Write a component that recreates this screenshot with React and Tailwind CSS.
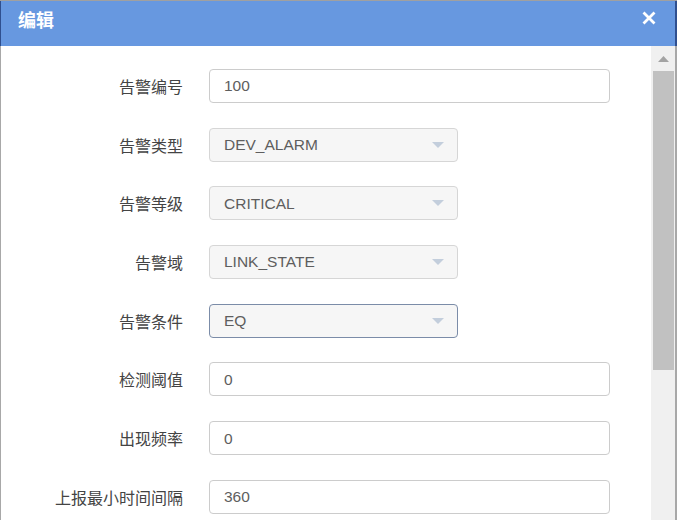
import React from "react";

const rows = [
  { label: "告警编号", value: "100", type: "input" },
  { label: "告警类型", value: "DEV_ALARM", type: "select" },
  { label: "告警等级", value: "CRITICAL", type: "select" },
  { label: "告警域", value: "LINK_STATE", type: "select" },
  { label: "告警条件", value: "EQ", type: "select", focus: true },
  { label: "检测阈值", value: "0", type: "input" },
  { label: "出现频率", value: "0", type: "input" },
  { label: "上报最小时间间隔", value: "360", type: "input" },
];

const font = { fontFamily: '"Liberation Sans", "Noto Sans CJK SC", sans-serif' };

function Field({ row }) {
  if (row.type === "input") {
    return (
      <div className="h-[34px] w-[401px] rounded-[4px] border border-[#cccccc] bg-white pl-[14px] flex items-center text-[15.5px] text-[#5e5e5e] shrink-0">
        {row.value}
      </div>
    );
  }
  return (
    <div
      className={
        "h-[34px] w-[249px] rounded-[4px] border bg-[#f6f6f6] pl-[14px] pr-[13px] flex items-center justify-between text-[15.5px] text-[#5e5e5e] shrink-0 " +
        (row.focus ? "border-[#7b8ca8]" : "border-[#d6d6d6]")
      }
    >
      <span>{row.value}</span>
      <svg width="12" height="6" viewBox="0 0 12 6">
        <path d="M0 0 L12 0 L6 6 Z" fill="#c3cedc" />
      </svg>
    </div>
  );
}

export default function App() {
  return (
    <div className="w-[677px] h-[520px] overflow-hidden flex flex-col bg-white" style={font}>
      <div className="h-px bg-[#a0a0a0] shrink-0" />
      <div className="h-[45px] shrink-0 flex bg-[#6798e0] border-l border-[#2f4f8f]">
        <div className="flex-1 flex items-start justify-between pl-[17px] pr-[19px] pt-[7px]">
          <span className="text-white font-bold text-[18px] leading-[22px]" style={{ fontFamily: '"Noto Sans CJK SC", sans-serif' }}>
            编辑
          </span>
          <svg width="14" height="14" viewBox="0 0 14 14" className="mt-[3px]">
            <path d="M1.5 1.5 L12.5 12.5 M12.5 1.5 L1.5 12.5" stroke="white" strokeWidth="2.8" />
          </svg>
        </div>
        <div className="w-[2px] bg-[#2f4f8f]" />
      </div>
      <div className="flex-1 flex min-h-0">
        <div className="w-px bg-[#a8a8a8]" />
        <div className="flex-1 pt-[23px] flex flex-col gap-[24.7px]">
          {rows.map((r) => (
            <div key={r.label} className="flex items-center">
              <div
                className="w-[182px] text-right text-[16px] text-[#444444] shrink-0"
                style={{ fontFamily: '"Noto Sans CJK SC", sans-serif' }}
              >
                {r.label}
              </div>
              <div className="ml-[26px]">
                <Field row={r} />
              </div>
            </div>
          ))}
        </div>
        <div className="w-[24px] bg-[#f0f0f0] flex flex-col items-center pt-[10px]">
          <svg width="11" height="6" viewBox="0 0 11 6">
            <path d="M0 6 L5.5 0 L11 6 Z" fill="#a3a3a3" />
          </svg>
          <div className="mt-[9px] ml-[1px] w-[21px] h-[299px] bg-[#c1c1c1]" />
        </div>
        <div className="w-[2px] bg-[#a8a8a8]" />
      </div>
    </div>
  );
}
